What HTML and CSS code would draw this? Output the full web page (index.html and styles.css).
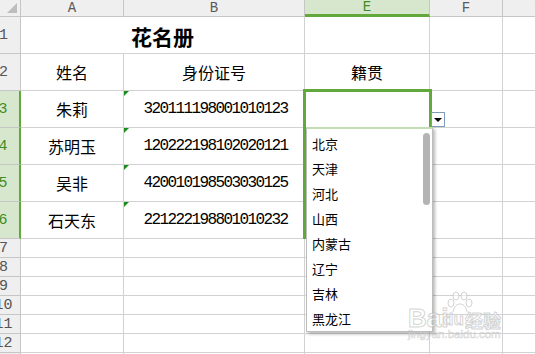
FILE: index.html
```html
<!DOCTYPE html>
<html lang="zh-CN">
<head>
<meta charset="utf-8">
<title>花名册</title>
<link rel="stylesheet" href="styles.css">
</head>
<body>
<div class="sheet">
  <div class="corner"></div>
  <div class="ch">A</div>
  <div class="ch">B</div>
  <div class="ch ch-on">E</div>
  <div class="ch">F</div>
  <div class="ch">G</div>

  <div class="rh">1</div>
  <div class="c title">花名册</div>
  <div class="c"></div>
  <div class="c"></div>
  <div class="c"></div>

  <div class="rh">2</div>
  <div class="c">姓名</div>
  <div class="c">身份证号</div>
  <div class="c">籍贯</div>
  <div class="c"></div>
  <div class="c"></div>

  <div class="rh rh-on">3</div>
  <div class="c">朱莉</div>
  <div class="c num flag">320111198001010123</div>
  <div class="c active">
    <div class="sel"></div>
    <div class="dd-btn"><span class="dd-arrow"></span></div>
    <div class="dd-list">
      <div class="dd-item">北京</div>
      <div class="dd-item">天津</div>
      <div class="dd-item">河北</div>
      <div class="dd-item">山西</div>
      <div class="dd-item">内蒙古</div>
      <div class="dd-item">辽宁</div>
      <div class="dd-item">吉林</div>
      <div class="dd-item">黑龙江</div>
      <div class="dd-thumb"></div>
    </div>
  </div>
  <div class="c"></div>
  <div class="c"></div>

  <div class="rh rh-on">4</div>
  <div class="c">苏明玉</div>
  <div class="c num flag">120222198102020121</div>
  <div class="c"></div>
  <div class="c"></div>
  <div class="c"></div>

  <div class="rh rh-on">5</div>
  <div class="c">吴非</div>
  <div class="c num flag">420010198503030125</div>
  <div class="c"></div>
  <div class="c"></div>
  <div class="c"></div>

  <div class="rh rh-on">6</div>
  <div class="c">石天东</div>
  <div class="c num flag">221222198801010232</div>
  <div class="c"></div>
  <div class="c"></div>
  <div class="c"></div>

  <div class="rh">7</div>
  <div class="c"></div><div class="c"></div><div class="c"></div><div class="c"></div><div class="c"></div>
  <div class="rh">8</div>
  <div class="c"></div><div class="c"></div><div class="c"></div><div class="c"></div><div class="c"></div>
  <div class="rh">9</div>
  <div class="c"></div><div class="c"></div><div class="c"></div><div class="c"></div><div class="c"></div>
  <div class="rh">10</div>
  <div class="c"></div><div class="c"></div><div class="c"></div><div class="c"></div><div class="c"></div>
  <div class="rh">11</div>
  <div class="c"></div><div class="c"></div><div class="c"></div><div class="c"></div><div class="c"></div>
  <div class="rh">12</div>
  <div class="c"></div><div class="c"></div><div class="c"></div><div class="c"></div><div class="c"></div>
  <div class="rh">13</div>
  <div class="c"></div><div class="c"></div><div class="c"></div><div class="c"></div><div class="c"></div>
</div>

<div class="wm">
  <span class="wm-bai">Bai</span>
  <svg class="wm-paw" width="30" height="22" viewBox="0 0 30 22">
    <ellipse cx="6" cy="12" rx="3" ry="4" />
    <ellipse cx="11" cy="5" rx="3" ry="4" />
    <ellipse cx="19" cy="5" rx="3" ry="4" />
    <ellipse cx="24" cy="12" rx="3" ry="4" />
    <path d="M8 21 C9 15 12 13 15 13 C18 13 21 15 22 21" />
  </svg>
  <span class="wm-du">du</span>
  <span class="wm-jy">经验</span>
  <span class="wm-url">jingyan.baidu.com</span>
</div>
</body>
</html>
```
FILE: styles.css
```css
* {
  box-sizing: border-box;
  margin: 0;
  padding: 0;
}

body {
  margin: 0;
  width: 535px;
  height: 354px;
  overflow: hidden;
  background: #ffffff;
  font-family: "Noto Sans CJK SC", "Noto Sans", sans-serif;
  position: relative;
}

.sheet {
  display: grid;
  grid-template-columns: 21px 103px 181px 125px 73px 73px;
  grid-template-rows: 17px repeat(6, 37px) repeat(7, 19px);
  width: 576px;
}

.corner {
  background: #efefef;
  border-right: 1px solid #c6c6c6;
  border-bottom: 1px solid #c6c6c6;
  position: relative;
}

.corner::after {
  content: "";
  position: absolute;
  right: 3px;
  bottom: 3px;
  width: 0;
  height: 0;
  border-left: 10px solid transparent;
  border-bottom: 10px solid #bdbdbd;
}

.ch {
  background: #efefef;
  border-right: 1px solid #c6c6c6;
  border-bottom: 1px solid #c6c6c6;
  display: flex;
  align-items: center;
  justify-content: center;
  font-family: "Liberation Mono", monospace;
  font-size: 14px;
  color: #5a5a5a;
}

.ch-on {
  background: #d6e7cd;
  color: #3f8c22;
  border-bottom: 3px solid #62a83c;
}

.rh {
  background: #efefef;
  border-right: 1px solid #c6c6c6;
  border-bottom: 1px solid #c6c6c6;
  display: flex;
  align-items: center;
  justify-content: center;
  padding-right: 13px;
  font-family: "Liberation Mono", monospace;
  font-size: 15px;
  color: #555555;
  overflow: visible;
  white-space: nowrap;
}

.rh-on {
  background: #d6e7cd;
  color: #3f8c22;
  border-right: 2px solid #62a83c;
}

.c {
  border-right: 1px solid #d2d2d2;
  border-bottom: 1px solid #d2d2d2;
  display: flex;
  align-items: center;
  justify-content: center;
  font-size: 16px;
  color: #000000;
  position: relative;
  white-space: nowrap;
}

.title {
  grid-column: span 2;
  font-size: 21px;
  font-weight: bold;
  padding-top: 2px;
}

.num {
  font-family: "Liberation Mono", monospace;
  font-size: 16px;
  letter-spacing: -1.6px;
  padding-left: 3px;
}

.flag::before {
  content: "";
  position: absolute;
  top: 0;
  left: 0;
  width: 0;
  height: 0;
  border-top: 5px solid #1c8c1c;
  border-right: 5px solid transparent;
}

.sel {
  position: absolute;
  left: -2px;
  top: -2px;
  right: -3px;
  bottom: -112px;
  border: 3px solid #62a83c;
  z-index: 2;
}

.dd-btn {
  position: absolute;
  left: 126px;
  top: 21px;
  width: 14px;
  height: 15px;
  border: 1px solid #7f9db9;
  background: #ffffff;
  display: flex;
  align-items: center;
  justify-content: center;
  z-index: 3;
}

.dd-arrow {
  width: 0;
  height: 0;
  border-left: 4px solid transparent;
  border-right: 4px solid transparent;
  border-top: 4px solid #000000;
  margin-top: 1px;
}

.dd-list {
  position: absolute;
  left: 1px;
  top: 36px;
  width: 127px;
  height: 205px;
  background: #ffffff;
  border: 1px solid #bdbdbd;
  border-top: 2px solid #c3ddb5;
  padding-top: 2px;
  box-shadow: 2px 2px 3px rgba(0, 0, 0, 0.28);
  z-index: 4;
  display: flex;
  flex-direction: column;
}

.dd-item {
  height: 25px;
  line-height: 25px;
  font-size: 13px;
  padding-left: 5px;
  color: #000000;
  text-align: left;
}

.dd-thumb {
  position: absolute;
  right: 2px;
  top: 4px;
  width: 7px;
  height: 72px;
  border-radius: 4px;
  background: #b4b4b4;
}

.wm {
  position: absolute;
  left: 400px;
  top: 285px;
  width: 110px;
  height: 60px;
  z-index: 10;
  pointer-events: none;
  color: rgba(255, 255, 255, 0.55);
  -webkit-text-stroke: 1px rgba(175, 175, 175, 0.55);
}

.wm-bai {
  position: absolute;
  left: 8px;
  top: 20px;
  font-family: "Liberation Sans", sans-serif;
  font-weight: bold;
  font-size: 26px;
  line-height: 26px;
}

.wm-paw {
  position: absolute;
  left: 45px;
  top: 6px;
  fill: rgba(255, 255, 255, 0.5);
  stroke: rgba(175, 175, 175, 0.55);
  stroke-width: 1;
}

.wm-du {
  position: absolute;
  left: 43px;
  top: 26px;
  font-family: "Liberation Sans", sans-serif;
  font-weight: bold;
  font-size: 17px;
  line-height: 17px;
}

.wm-jy {
  position: absolute;
  left: 65px;
  top: 26px;
  font-family: "Noto Sans CJK SC", sans-serif;
  font-weight: bold;
  font-size: 18px;
  line-height: 18px;
}

.wm-url {
  position: absolute;
  left: 8px;
  top: 42px;
  font-family: "Liberation Sans", sans-serif;
  font-size: 11.5px;
  line-height: 14px;
  -webkit-text-stroke: 0.6px rgba(175, 175, 175, 0.55);
}
```
